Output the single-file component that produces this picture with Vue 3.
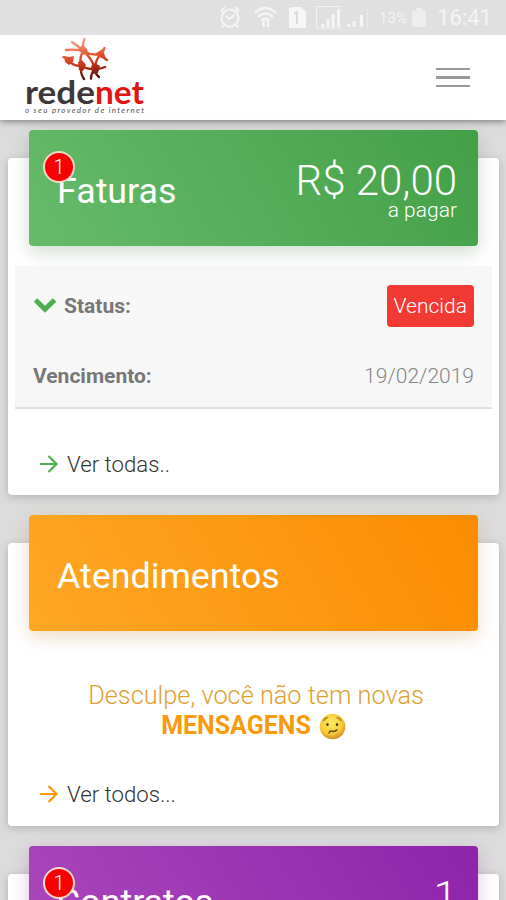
<template>
  <div class="app">
    <!-- Status bar -->
    <div class="status-bar">
      <svg class="status-icons" width="230" height="35" viewBox="0 0 230 35" fill="none">
        <g stroke="#f5f5f5" stroke-width="2">
          <circle cx="15" cy="18" r="8.5" />
          <path d="M10.5 16l4 3 5-4M6 11l4-4M20 7l4 4M9 25l-2 2M21 25l2 2" />
          <path d="M40 13q10-10 21 0M43 17q7.5-7 15 0M46.500 20.500q4-4 8 0" stroke-width="2.500" />
          <path d="M48.500 20v7M53 20v7" stroke-width="2.500" />
        </g>
        <path d="M74 8l4-1h8l5 5v16H74z" fill="#f6f6f6" />
        <path d="M79 14l3-2v12" stroke="#dadada" stroke-width="2" />
        <path d="M101 6.500h26M101.500 6v22h25" stroke="#f2f2f2" />
        <path d="M108 24v3M113 19v8M118 14v13M123.500 9v18" stroke="#f5f5f5" stroke-width="3" />
        <path d="M134 24v3M139 21v6M146.500 15v12" stroke="#f5f5f5" stroke-width="3" />
        <path d="M152.500 9v19" stroke="#eaeaea" />
        <path d="M201 8h6v3h4v16h-14V11h4z" fill="#eee" />
        <text x="164" y="23" class="battery" textLength="28">13%</text>
      </svg>
      <span class="clock">16:41</span>
    </div>

    <!-- Navbar -->
    <header class="navbar">
      <svg class="logo" width="126" height="80" viewBox="0 0 126 80">
        <defs>
          <linearGradient id="globe" gradientUnits="userSpaceOnUse" x1="58" y1="0" x2="64" y2="42">
            <stop offset="0" stop-color="#f6a78e" />
            <stop offset=".45" stop-color="#e2502a" />
            <stop offset=".7" stop-color="#b62c16" />
            <stop offset="1" stop-color="#431313" />
          </linearGradient>
        </defs>
        <g fill="none" stroke="url(#globe)" stroke-width="2.400" stroke-linecap="round">
          <path d="M61.500 1Q59 7 60 14M43 12q9-1 17 1M49 4q5 3 11 9M60 13q-4 7-2 15M60 13q9 7 12 18M60 13q9 5 18 3" />
          <path d="M78 15l3.500-5M78 15q2 5 6 7M78 16q-6 6-6 15M40.500 19l5 3M45 22q5 6 13 6 8 4 14 3M58 28q-1 7 3 13" />
          <path d="M72 31q-4 4-4 9.500M72 31q0 5 4 8M72 31q6 0 10-2" />
        </g>
        <g fill="url(#globe)">
          <path d="M41 18l5 1 5-1-1 6-4 3-4-3z" />
          <path d="M73 15l5-3 4-2-1 5 2 6-5-1z" />
          <path d="M56 10l4-3 4 4 1 4-6 2zM55 24l4-2 4 5-3 6-4-1zM68 28l4-3 5 3-2 7-5 1z" />
        </g>
        <text x="2" y="66" class="logo-name" textLength="70" lengthAdjust="spacingAndGlyphs">rede</text>
        <text x="72" y="66" class="logo-name red" textLength="49" lengthAdjust="spacingAndGlyphs">net</text>
        <text x="2" y="74.500" class="logo-slogan" textLength="119" lengthAdjust="spacing">o seu provedor de internet</text>
      </svg>
      <button class="menu-btn" aria-label="Menu">
        <span></span>
        <span></span>
        <span></span>
      </button>
    </header>

    <main class="content">
      <section v-for="card in cards" :key="card.title" class="card" :class="card.color">
        <div class="card-header">
          <h2 class="title">{{ card.title }}</h2>
          <span v-if="card.badge" class="badge">{{ card.badge }}</span>
          <div v-if="card.value" class="total">
            <div class="amount">{{ card.value }}</div>
            <div v-if="card.caption" class="caption">{{ card.caption }}</div>
          </div>
        </div>

        <div v-if="card.invoice" class="invoice">
          <div class="row">
            <span class="label">
              <svg class="chevron" width="24" height="16" viewBox="0 0 24 16">
                <path d="M2.500 2l9.500 9.200L21.500 2" fill="none" stroke="#4caf50" stroke-width="5" />
              </svg>
              Status:
            </span>
            <span class="tag">{{ card.invoice.status }}</span>
          </div>
          <div class="row">
            <span class="label">Vencimento:</span>
            <span class="date">{{ card.invoice.dueDate }}</span>
          </div>
        </div>

        <div v-if="card.empty" class="empty">
          <p class="message">Desculpe, você não tem novas</p>
          <p class="strong">
            <span>MENSAGENS</span>
            <svg width="27" height="27" viewBox="0 0 27 27">
              <defs>
                <radialGradient id="face" cx=".45" cy=".35" r=".65">
                  <stop offset="0" stop-color="#ffeb63" />
                  <stop offset=".7" stop-color="#f7c836" />
                  <stop offset="1" stop-color="#c98c1d" />
                </radialGradient>
              </defs>
              <circle cx="13.500" cy="13.500" r="12.800" fill="url(#face)" />
              <g fill="none" stroke="#665018" stroke-width="1.500" stroke-linecap="round">
                <path d="M4.500 7.500q1.500-2.500 4-3M18 4.500q2.500.5 4 3" stroke="#b58420" />
                <path d="M10 20q1-2.500 3-1.800t5-1.200" />
              </g>
              <ellipse cx="8.500" cy="11.500" rx="1.200" ry="1.500" fill="#4b3814" />
              <ellipse cx="18" cy="11.500" rx="1.200" ry="1.500" fill="#4b3814" />
            </svg>
          </p>
        </div>

        <a v-if="card.link" class="more">
          <svg width="20" height="18" viewBox="0 0 20 18" fill="none" stroke="currentColor" stroke-width="2.200">
            <path d="M1 9h16M9.500 1L17.500 9l-8 8" />
          </svg>
          <span>{{ card.link }}</span>
        </a>
      </section>
    </main>
  </div>
</template>

<script setup>
const cards = [
  {
    title: 'Faturas',
    color: 'green',
    badge: 1,
    value: 'R$ 20,00',
    caption: 'a pagar',
    invoice: { status: 'Vencida', dueDate: '19/02/2019' },
    link: 'Ver todas..'
  },
  {
    title: 'Atendimentos',
    color: 'orange',
    empty: true,
    link: 'Ver todos...'
  },
  {
    title: 'Contratos',
    color: 'purple',
    badge: 1,
    value: '1'
  }
]
</script>

<style>
body {
  margin: 0;
  background: #dcdcdc;
}
</style>

<style scoped>
.app {
  height: 900px;
  overflow: hidden;
  background: #dcdcdc;
  font-family: Roboto, 'Liberation Sans', sans-serif;
  font-weight: 300;
}

/* Status bar */
.status-bar {
  position: relative;
  z-index: 2;
  height: 35px;
  display: flex;
  justify-content: flex-end;
  align-items: center;
  padding-right: 14px;
  background: #e0e0e0;
}

.status-icons {
  margin-right: -9px;
}

.battery {
  fill: #f3f3f3;
  font-size: 15px;
  font-weight: 400;
}

.clock {
  width: 56px;
  text-align: right;
  font-size: 22px;
  font-weight: 400;
  color: #f4f4f4;
}

/* Navbar */
.navbar {
  position: relative;
  height: 85px;
  box-sizing: border-box;
  display: flex;
  justify-content: space-between;
  align-items: center;
  padding: 0 36px 0 23px;
  background: #fff;
  box-shadow: 0 1px 7px rgba(0, 0, 0, 0.5);
}

.logo-name {
  font-family: Lato, sans-serif;
  font-size: 32px;
  font-weight: 700;
  fill: #3d3739;
}

.logo-name.red {
  fill: #e31414;
}

.logo-slogan {
  font-family: Lato, sans-serif;
  font-size: 8px;
  font-style: italic;
  font-weight: 400;
  fill: #555;
}

.menu-btn {
  display: flex;
  flex-direction: column;
  gap: 6px;
  padding: 0;
  border: none;
  background: none;
}

.menu-btn span {
  width: 34px;
  height: 2.400px;
  background: #999;
}

/* Cards */
.content {
  padding: 38px 7px 0 8px;
}

.card {
  display: flow-root;
  margin-bottom: 48px;
  border-radius: 4px;
  background: #fff;
  box-shadow: 0 2px 10px rgba(0, 0, 0, 0.2);
}

.card.green {
  height: 337px;
}

.card.orange {
  height: 283px;
}

.card.purple {
  height: 300px;
}

.card-header {
  position: relative;
  height: 116px;
  box-sizing: border-box;
  display: flex;
  justify-content: space-between;
  margin: -28px 21px 0;
  padding: 29px 21px 0 28px;
  border-radius: 4px;
  color: #fff;
}

.green .card-header {
  background: linear-gradient(60deg, #66bb6a, #43a047);
  box-shadow: 0 6px 18px rgba(76, 125, 80, 0.27);
}

.orange .card-header {
  background: linear-gradient(60deg, #ffa726, #fb8c00);
  box-shadow: 0 6px 18px rgba(190, 125, 40, 0.27);
}

.purple .card-header {
  background: linear-gradient(60deg, #ab47bc, #8e24aa);
  box-shadow: 0 6px 18px rgba(120, 39, 140, 0.27);
}

.badge {
  position: absolute;
  left: 14px;
  top: 21px;
  width: 32px;
  height: 32px;
  box-sizing: border-box;
  border: 2px solid #f3d9c8;
  border-radius: 50%;
  background: #f80000;
  font-size: 20px;
  line-height: 28px;
  text-align: center;
}

.title {
  margin: 11px 0 0;
  font-size: 35.800px;
  line-height: 42px;
  font-weight: 400;
}

.purple .title {
  margin-top: 6px;
}

.total {
  text-align: right;
}

.amount {
  font-size: 42px;
  line-height: 44px;
}

.caption {
  font-size: 21px;
  line-height: 15px;
}

/* Invoice rows */
.invoice {
  height: 141px;
  margin: 20px 7px 0;
  border-bottom: 2px solid #e0e0e0;
  background: #f7f7f7;
}

.row {
  height: 62px;
  display: flex;
  justify-content: space-between;
  align-items: center;
  padding: 0 18px;
  font-size: 21px;
  color: #777;
}

.row:first-child {
  height: 79px;
}

.label {
  display: flex;
  align-items: center;
  gap: 7px;
  font-weight: 700;
}

.tag {
  padding: 0 7px;
  border-radius: 4px;
  background: #f13a34;
  color: #fff;
  line-height: 42px;
}

.date {
  color: #868686;
}

/* Empty message */
.empty {
  height: 109px;
  margin-top: 50px;
  text-align: center;
  color: #dfa032;
}

.empty p {
  margin: 0;
  font-size: 25px;
  line-height: 30px;
}

.empty .message {
  padding-left: 5px;
  font-size: 25.300px;
}

.empty .strong {
  display: flex;
  justify-content: center;
  align-items: center;
  gap: 8px;
  font-weight: 700;
  color: #f79a0c;
}

/* Card link */
.more {
  display: flex;
  align-items: center;
  gap: 8px;
  margin-left: 31px;
  font-size: 22.200px;
  line-height: 30px;
}

.more span {
  color: #333;
}

.green .more {
  margin-top: 40px;
  color: #4caf50;
}

.orange .more {
  margin-top: -11px;
  color: #ff9800;
}
</style>
